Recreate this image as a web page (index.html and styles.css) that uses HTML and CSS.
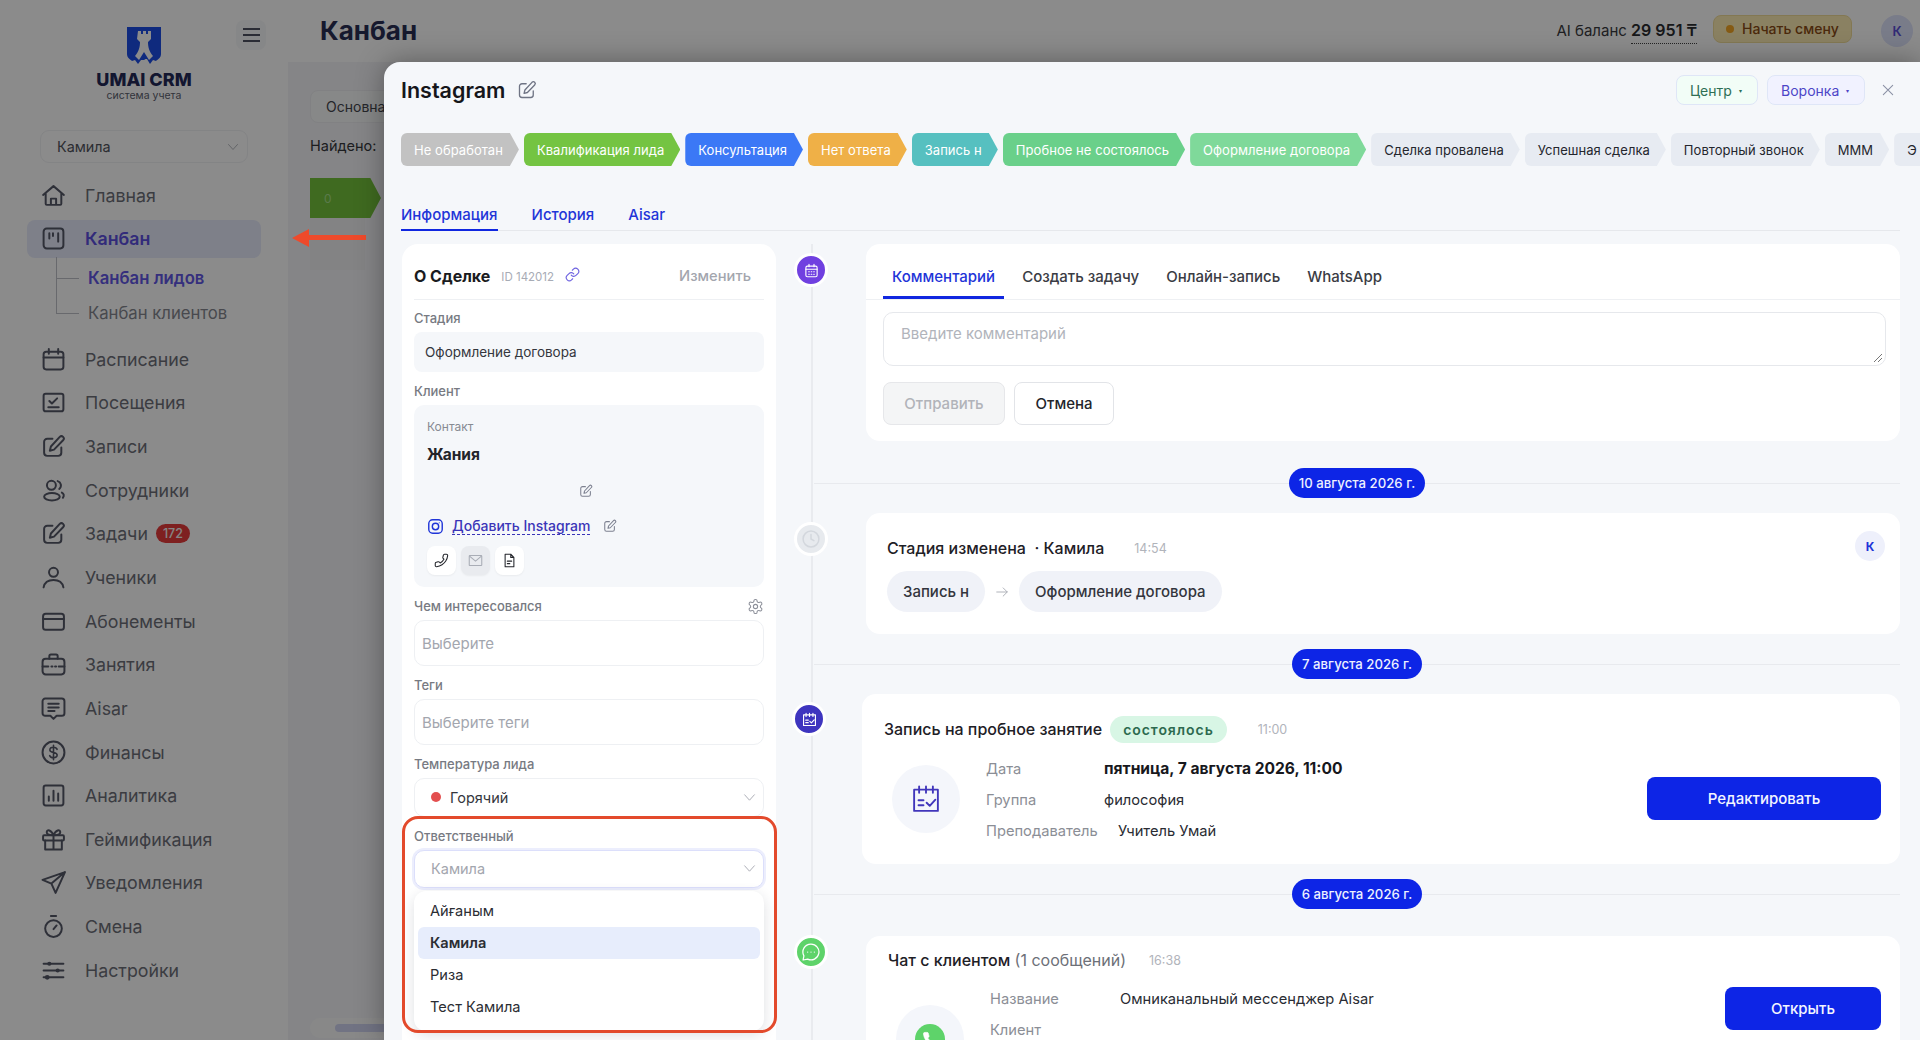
FILE: index.html
```html
<!DOCTYPE html>
<html lang="ru">
<head>
<meta charset="utf-8">
<title>Канбан</title>
<link rel="stylesheet" href="styles.css">
</head>
<body>
<svg class="defs" width="0" height="0">
  <symbol id="i-home" viewBox="0 0 24 24"><path d="M2 11.500 12 3l10 8.500M4.500 10v10a1 1 0 0 0 1 1h13a1 1 0 0 0 1-1V10M9.500 21v-6h5v6"/></symbol>
  <symbol id="i-kanban" viewBox="0 0 24 24"><rect x="2.500" y="2.500" width="19" height="19" rx="3"/><path d="M8 7v5M11.500 7v2.500M16.500 7v8"/></symbol>
  <symbol id="i-cal" viewBox="0 0 24 24"><rect x="2.500" y="4.500" width="19" height="17" rx="2.500"/><path d="M2.500 10h19M7.500 2v4.500M16.500 2v4.500"/></symbol>
  <symbol id="i-attend" viewBox="0 0 24 24"><rect x="2.500" y="3.500" width="19" height="17" rx="2"/><path d="m8 10.500 2.500 2.500 5-5M7 16.500h10"/></symbol>
  <symbol id="i-edit" viewBox="0 0 24 24"><path d="M11 4.500H6a3 3 0 0 0-3 3V18a3 3 0 0 0 3 3h10.500a3 3 0 0 0 3-3v-5"/><path d="M18 2.800a2.200 2.200 0 0 1 3.200 3.200L12.500 15l-4 1 1-4z"/></symbol>
  <symbol id="i-staff" viewBox="0 0 24 24"><circle cx="10" cy="7" r="4.300"/><ellipse cx="10.500" cy="18" rx="7.500" ry="3.500"/><path d="M16 3a4.300 4.300 0 0 1 1.500 7.500M20 14c2 1 2.500 3 1 5"/></symbol>
  <symbol id="i-user" viewBox="0 0 24 24"><circle cx="12" cy="7" r="4.300"/><path d="M2.500 21.500c1-5 5-7 9.500-7s8.500 2 9.500 7"/></symbol>
  <symbol id="i-card" viewBox="0 0 24 24"><rect x="2" y="4.500" width="20" height="15.500" rx="2.500"/><path d="M2 9.500h20"/></symbol>
  <symbol id="i-bag" viewBox="0 0 24 24"><rect x="1.500" y="6.500" width="21" height="15" rx="3"/><path d="M8 6.500V4a1.500 1.500 0 0 1 1.500-1.500h5A1.500 1.500 0 0 1 16 4v2.500M1.500 14H7M10 14h1M13.500 14h1M17 14h5.500"/></symbol>
  <symbol id="i-chat" viewBox="0 0 24 24"><path d="M4 2.500h16a2.500 2.500 0 0 1 2.500 2.500v11.500A2.500 2.500 0 0 1 20 19h-5l-3 3-3-3H4a2.500 2.500 0 0 1-2.500-2.500V5A2.500 2.500 0 0 1 4 2.500z"/><path d="M7 7.500h10M7 11h10M7 14.500h6"/></symbol>
  <symbol id="i-money" viewBox="0 0 24 24"><circle cx="12" cy="12" r="10.500"/><path d="M15.500 9c-.5-1.300-2-2-3.500-2-2 0-3.500 1-3.500 2.500 0 3.500 7 1.700 7 5 0 1.500-1.500 2.500-3.500 2.500-1.700 0-3.200-.8-3.700-2M12 5v14" class="thin"/></symbol>
  <symbol id="i-chart" viewBox="0 0 24 24"><rect x="2.500" y="2.500" width="19" height="19" rx="2"/><path d="M7.500 17v-4M12 17V7.500M16.500 17v-7"/></symbol>
  <symbol id="i-gift" viewBox="0 0 24 24"><rect x="2" y="8" width="20" height="5" rx="1"/><path d="M4 13v8.500h16V13M12 8v13.500M12 8C10 2.500 5.500 2 5.500 5c0 2 3 3 6.500 3zm0 0c2-5.500 6.500-6 6.500-3 0 2-3 3-6.500 3z"/></symbol>
  <symbol id="i-send" viewBox="0 0 24 24"><path d="M23 2 1.500 9.500 10 13l4 9zM10 13 23 2"/></symbol>
  <symbol id="i-timer" viewBox="0 0 24 24"><circle cx="12" cy="14" r="8"/><path d="M9.500 2h5M12 14.500l3-3.500"/></symbol>
  <symbol id="i-sliders" viewBox="0 0 24 24"><path d="M2.500 5.500h19M2.500 12h19M2.500 18.500h19"/><circle cx="8" cy="5.500" r="2" class="solid"/><circle cx="16" cy="12" r="2" class="solid"/><circle cx="6" cy="18.500" r="2.300" class="solid"/></symbol>
  <symbol id="i-ig" viewBox="0 0 24 24"><rect x="2.500" y="2.500" width="19" height="19" rx="5.500"/><circle cx="12" cy="12" r="4.500"/><circle cx="17.300" cy="6.700" r=".8" class="solid"/></symbol>
  <symbol id="i-phone" viewBox="0 0 24 24"><path d="M22 16.920v3a2 2 0 0 1-2.180 2 19.790 19.790 0 0 1-8.630-3.070 19.500 19.500 0 0 1-6-6 19.790 19.790 0 0 1-3.070-8.670A2 2 0 0 1 4.110 2h3a2 2 0 0 1 2 1.720 12.840 12.840 0 0 0 .7 2.810 2 2 0 0 1-.45 2.110L8.090 9.910a16 16 0 0 0 6 6l1.270-1.270a2 2 0 0 1 2.110-.45 12.840 12.840 0 0 0 2.810.7A2 2 0 0 1 22 16.920z"/></symbol>
  <symbol id="i-handset" viewBox="0 0 24 24"><path transform="matrix(-1 0 0 1 24 0)" d="M22 16.920v3a2 2 0 0 1-2.180 2 19.790 19.790 0 0 1-8.630-3.070 19.500 19.500 0 0 1-6-6 19.790 19.790 0 0 1-3.070-8.670A2 2 0 0 1 4.110 2h3a2 2 0 0 1 2 1.720 12.840 12.840 0 0 0 .7 2.810 2 2 0 0 1-.45 2.110L8.090 9.910a16 16 0 0 0 6 6l1.270-1.270a2 2 0 0 1 2.110-.45 12.840 12.840 0 0 0 2.810.7A2 2 0 0 1 22 16.920z"/></symbol>
  <symbol id="i-mail" viewBox="0 0 24 24"><rect x="2" y="4" width="20" height="16" rx="1"/><path d="m2.500 5 9.500 8 9.500-8"/></symbol>
  <symbol id="i-doc" viewBox="0 0 24 24"><path d="M5 2h9l5 5v15H5zM14 2v5h5M8.500 13h7M8.500 17h4"/></symbol>
  <symbol id="i-gear" viewBox="0 0 24 24"><path d="M12.220 2h-.44a2 2 0 0 0-2 2v.18a2 2 0 0 1-1 1.730l-.43.250a2 2 0 0 1-2 0l-.15-.08a2 2 0 0 0-2.730.730l-.22.380a2 2 0 0 0 .730 2.730l.15.100a2 2 0 0 1 1 1.720v.510a2 2 0 0 1-1 1.740l-.15.090a2 2 0 0 0-.730 2.730l.22.380a2 2 0 0 0 2.730.730l.15-.08a2 2 0 0 1 2 0l.43.250a2 2 0 0 1 1 1.730V20a2 2 0 0 0 2 2h.44a2 2 0 0 0 2-2v-.18a2 2 0 0 1 1-1.730l.43-.25a2 2 0 0 1 2 0l.15.08a2 2 0 0 0 2.730-.73l.22-.39a2 2 0 0 0-.73-2.730l-.15-.08a2 2 0 0 1-1-1.740v-.5a2 2 0 0 1 1-1.740l.15-.09a2 2 0 0 0 .73-2.730l-.22-.38a2 2 0 0 0-2.730-.73l-.15.08a2 2 0 0 1-2 0l-.43-.25a2 2 0 0 1-1-1.730V4a2 2 0 0 0-2-2z"/><circle cx="12" cy="12" r="3"/></symbol>
  <symbol id="i-link" viewBox="0 0 24 24"><path d="M10 13a5 5 0 0 0 7.540.54l3-3a5 5 0 0 0-7.070-7.070l-1.720 1.710"/><path d="M14 11a5 5 0 0 0-7.540-.54l-3 3a5 5 0 0 0 7.070 7.070l1.710-1.710"/></symbol>
  <symbol id="i-clock" viewBox="0 0 24 24"><circle cx="12" cy="12" r="9.500"/><path d="M12 6.500V12l3.500 2"/></symbol>
  <symbol id="i-bubble" viewBox="0 0 24 24"><path d="M12 2.500a9.500 9.500 0 1 1-4 18.100l-5.500 1 1-5A9.500 9.500 0 0 1 12 2.500z"/><path d="M8 12h.01M12 12h.01M16 12h.01"/></symbol>
  <symbol id="i-grid" viewBox="0 0 24 24"><rect x="3" y="5" width="18" height="17" rx="2.500"/><path d="M3 10h18M8 2v4M16 2v4M7.500 14h1M11.500 14h1M15.500 14h1M7.500 18h1M11.500 18h1M15.500 18h1"/></symbol>
  <symbol id="i-calcheck" viewBox="0 0 24 24"><path d="M2.500 4.500h19v17h-19zM6.500 2v5M12 2v5M17.500 2v5M6 13h4M6 17h4M12.500 15l2.500 2.500 4.500-5"/></symbol>
  <symbol id="i-chev" viewBox="0 0 24 24"><path d="m3 7 9 10 9-10"/></symbol>
  <symbol id="i-x" viewBox="0 0 24 24"><path d="M5 5l14 14M19 5 5 19"/></symbol>
  <symbol id="i-right" viewBox="0 0 24 24"><path d="M3 12h18M14 5l7 7-7 7"/></symbol>
</svg>

<div class="app">
  <aside class="sidebar">
    <div class="brand-row">
      <div class="brand">
        <svg class="shield" viewBox="0 0 34 38"><path class="shield-body" d="M0 0h34v27c0 4-3 5-5 7l-3-1-3 4-3-5h-1.500L17 33l-1 0-2 0-3 4-3-4-3 1c-2-2-5-3-5-7z"/><path class="shield-rook" d="M11 4h3v3h2V4h3v3h2V4h3v8l-3 3c0 5 1 9 5 14l-4 4-5-8-5 8-4-4c4-5 5-9 5-14l-3-3z"/></svg>
        <div class="brand-name">UMAI CRM</div>
        <div class="brand-sub">система учета</div>
      </div>
      <button class="burger"><span></span><span></span><span></span></button>
    </div>
    <div class="side-select"><span>Камила</span><svg class="ic chev"><use href="#i-chev"/></svg></div>
    <nav class="nav">
      <a class="nav-item"><svg class="ic"><use href="#i-home"/></svg><span>Главная</span></a>
      <a class="nav-item active"><svg class="ic"><use href="#i-kanban"/></svg><span>Канбан</span></a>
      <div class="subnav">
        <a class="sub-item current">Канбан лидов</a>
        <a class="sub-item">Канбан клиентов</a>
      </div>
      <a class="nav-item"><svg class="ic"><use href="#i-cal"/></svg><span>Расписание</span></a>
      <a class="nav-item"><svg class="ic"><use href="#i-attend"/></svg><span>Посещения</span></a>
      <a class="nav-item"><svg class="ic"><use href="#i-edit"/></svg><span>Записи</span></a>
      <a class="nav-item"><svg class="ic"><use href="#i-staff"/></svg><span>Сотрудники</span></a>
      <a class="nav-item"><svg class="ic"><use href="#i-edit"/></svg><span>Задачи</span><b class="count">172</b></a>
      <a class="nav-item"><svg class="ic"><use href="#i-user"/></svg><span>Ученики</span></a>
      <a class="nav-item"><svg class="ic"><use href="#i-card"/></svg><span>Абонементы</span></a>
      <a class="nav-item"><svg class="ic"><use href="#i-bag"/></svg><span>Занятия</span></a>
      <a class="nav-item"><svg class="ic"><use href="#i-chat"/></svg><span>Aisar</span></a>
      <a class="nav-item"><svg class="ic"><use href="#i-money"/></svg><span>Финансы</span></a>
      <a class="nav-item"><svg class="ic"><use href="#i-chart"/></svg><span>Аналитика</span></a>
      <a class="nav-item"><svg class="ic"><use href="#i-gift"/></svg><span>Геймификация</span></a>
      <a class="nav-item"><svg class="ic"><use href="#i-send"/></svg><span>Уведомления</span></a>
      <a class="nav-item"><svg class="ic"><use href="#i-timer"/></svg><span>Смена</span></a>
      <a class="nav-item"><svg class="ic"><use href="#i-sliders"/></svg><span>Настройки</span></a>
    </nav>
  </aside>

  <main class="main">
    <header class="topbar">
      <h1 class="page-title">Канбан</h1>
      <div class="top-right">
        <span class="balance">AI баланс <b>29 951 ₸</b></span>
        <span class="shift"><i></i>Начать смену</span>
        <span class="top-avatar">К</span>
      </div>
    </header>
    <section class="board">
      <div class="board-tab">Основная</div>
      <div class="found">Найдено:</div>
      <div class="board-stage">0</div>
      <div class="board-col"></div>
      <div class="board-scroll"><span></span></div>
    </section>
  </main>
</div>

<div class="overlay"></div>

<svg class="callout-arrow" viewBox="0 0 74 18"><path d="M0 9 17 0v6h57v5H17v7z"/></svg>

<section class="modal">
  <div class="modal-head">
    <div class="modal-title"><h2>Instagram</h2><svg class="ic title-edit"><use href="#i-edit"/></svg></div>
    <div class="modal-actions">
      <span class="pick pick-green">Центр<i>▾</i></span>
      <span class="pick pick-violet">Воронка<i>▾</i></span>
      <button class="close"><svg class="ic"><use href="#i-x"/></svg></button>
    </div>
  </div>

  <div class="stages">
    <span class="stage s-grey">Не обработан</span>
    <span class="stage s-lime">Квалификация лида</span>
    <span class="stage s-blue">Консультация</span>
    <span class="stage s-orange">Нет ответа</span>
    <span class="stage s-teal">Запись н</span>
    <span class="stage s-green">Пробное не состоялось</span>
    <span class="stage s-mint">Оформление договора</span>
    <span class="stage s-idle">Сделка провалена</span>
    <span class="stage s-idle">Успешная сделка</span>
    <span class="stage s-idle">Повторный звонок</span>
    <span class="stage s-idle">МММ</span>
    <span class="stage s-idle">Э</span>
  </div>

  <div class="tabs">
    <a class="tab on">Информация</a>
    <a class="tab">История</a>
    <a class="tab">Aisar</a>
  </div>

  <div class="modal-body">
    <div class="deal">
      <div class="deal-head">
        <strong>О Сделке</strong>
        <span class="deal-id">ID 142012</span>
        <svg class="ic deal-link"><use href="#i-link"/></svg>
        <a class="deal-change">Изменить</a>
      </div>

      <div class="lbl lbl-first">Стадия</div>
      <div class="static">Оформление договора</div>

      <div class="lbl">Клиент</div>
      <div class="client">
        <div class="client-cap">Контакт</div>
        <div class="client-name">Жания</div>
        <div class="client-edit"><svg class="ic mini"><use href="#i-edit"/></svg></div>
        <div class="client-ig">
          <svg class="ic ig"><use href="#i-ig"/></svg>
          <a class="ig-add">Добавить Instagram</a>
          <svg class="ic mini"><use href="#i-edit"/></svg>
        </div>
        <div class="client-btns">
          <span class="sq"><svg class="ic"><use href="#i-handset"/></svg></span>
          <span class="sq sq-off"><svg class="ic"><use href="#i-mail"/></svg></span>
          <span class="sq"><svg class="ic"><use href="#i-doc"/></svg></span>
        </div>
      </div>

      <div class="lbl lbl-row"><span>Чем интересовался</span><svg class="ic gear"><use href="#i-gear"/></svg></div>
      <div class="input h-a">Выберите</div>

      <div class="lbl">Теги</div>
      <div class="input h-b">Выберите теги</div>

      <div class="lbl">Температура лида</div>
      <div class="input h-c filled"><span class="hot"><i></i>Горячий</span><svg class="ic chev"><use href="#i-chev"/></svg></div>

      <div class="lbl">Ответственный</div>
      <div class="input h-d focus"><span>Камила</span><svg class="ic chev"><use href="#i-chev"/></svg></div>

      <ul class="menu">
        <li>Айғаным</li>
        <li class="sel">Камила</li>
        <li>Риза</li>
        <li>Тест Камила</li>
      </ul>
      <div class="callout-box"></div>
    </div>

    <div class="feed">
      <div class="row">
        <div class="node-cell"><span class="node n-purple"><svg class="ic"><use href="#i-grid"/></svg></span></div>
        <div class="card compose">
          <div class="c-tabs">
            <a class="c-tab on">Комментарий</a>
            <a class="c-tab">Создать задачу</a>
            <a class="c-tab">Онлайн-запись</a>
            <a class="c-tab">WhatsApp</a>
          </div>
          <div class="textarea">Введите комментарий<svg class="grip" viewBox="0 0 10 10"><path d="M9 1 1 9M9 5 5 9"/></svg></div>
          <div class="compose-btns">
            <button class="btn btn-off">Отправить</button>
            <button class="btn btn-line">Отмена</button>
          </div>
        </div>
      </div>

      <div class="date date-a"><i></i><span>10 августа 2026 г.</span><i></i></div>

      <div class="row">
        <div class="node-cell"><span class="node n-grey"><svg class="ic"><use href="#i-clock"/></svg></span></div>
        <div class="card change">
          <div class="change-main">
            <div class="line"><span class="ttl">Стадия изменена &nbsp;· Камила</span><span class="time t-a">14:54</span></div>
            <div class="flow"><span class="bean">Запись н</span><svg class="ic arrow"><use href="#i-right"/></svg><span class="bean">Оформление договора</span></div>
          </div>
          <span class="avatar">К</span>
        </div>
      </div>

      <div class="date"><i></i><span>7 августа 2026 г.</span><i></i></div>

      <div class="row">
        <div class="node-cell"><span class="node n-indigo shifted"><svg class="ic"><use href="#i-calcheck"/></svg></span></div>
        <div class="card trial">
          <div class="line"><span class="ttl">Запись на пробное занятие</span><span class="ok">состоялось</span><span class="time t-b">11:00</span></div>
          <div class="split">
            <span class="disc"><svg class="ic"><use href="#i-calcheck"/></svg></span>
            <dl class="facts">
              <div><dt>Дата</dt><dd class="strong">пятница, 7 августа 2026, 11:00</dd></div>
              <div><dt>Группа</dt><dd>философия</dd></div>
              <div><dt class="wide">Преподаватель</dt><dd>Учитель Умай</dd></div>
            </dl>
            <button class="btn btn-blue edit-btn">Редактировать</button>
          </div>
        </div>
      </div>

      <div class="date date-c"><i></i><span>6 августа 2026 г.</span><i></i></div>

      <div class="row">
        <div class="node-cell"><span class="node n-green up"><svg class="ic"><use href="#i-bubble"/></svg></span></div>
        <div class="card chat">
          <div class="line"><span class="ttl">Чат с клиентом <em>(1 сообщений)</em></span><span class="time t-c">16:38</span></div>
          <div class="split split-chat">
            <span class="disc disc-wa"><span class="wa"><svg class="ic"><use href="#i-phone"/></svg></span></span>
            <dl class="facts facts-chat">
              <div><dt>Название</dt><dd>Омниканальный мессенджер Aisar</dd></div>
              <div><dt>Клиент</dt><dd></dd></div>
            </dl>
            <button class="btn btn-blue open-btn">Открыть</button>
          </div>
        </div>
      </div>
    </div>
  </div>
</section>
</body>
</html>
```

FILE: styles.css
```css
* { box-sizing: border-box; }
html, body { margin: 0; height: 100%; overflow: hidden; }
body { position: relative; font-family: Inter, "Noto Sans", sans-serif; color: #1c1e26; background: #fff; }
.defs { position: absolute; }
h1, h2, ul, dl, dd { margin: 0; padding: 0; }
ul { list-style: none; }
button { font-family: inherit; border: 0; background: none; padding: 0; }
i, em { font-style: normal; }
.ic { width: 24px; height: 24px; fill: none; stroke: currentColor; stroke-width: 2; stroke-linecap: round; stroke-linejoin: round; flex: none; }
symbol .solid { fill: currentColor; stroke: none; }
symbol .thin { stroke-width: 1.500; }

/* shell */
.app { display: flex; height: 1040px; }
.sidebar { width: 288px; flex: none; background: #fff; }
.main { flex: 1; display: flex; flex-direction: column; min-width: 0; }

.brand-row { display: grid; grid-template-columns: 1fr auto 1fr; padding-top: 20px; height: 122px; }
.brand { grid-column: 2; display: flex; flex-direction: column; align-items: center; padding-top: 7px; }
.shield { width: 34px; height: 38px; }
.shield-body { fill: #1c4ee8; }
.shield-rook { fill: #fff; }
.brand-name { font-size: 18px; font-weight: 800; color: #232a58; line-height: 22px; margin-top: 4px; }
.brand-sub { font-size: 10.500px; color: #5b5e6d; line-height: 9px; }
.burger { grid-column: 3; justify-self: end; margin-right: 22px; width: 30px; height: 30px; border-radius: 8px; background: #f6f7f9; display: flex; flex-direction: column; justify-content: center; align-items: center; gap: 4px; }
.burger span { width: 17px; height: 2px; background: #4d5262; }

.side-select { margin: 8px 40px 0; height: 33px; border: 1px solid #f1f2f4; border-radius: 9px; display: flex; align-items: center; justify-content: space-between; padding: 0 8px 0 16px; font-size: 14.400px; color: #51545d; }
.side-select .chev { width: 12px; height: 12px; color: #9ea1a8; stroke-width: 1.500; }

.nav { margin-top: 13px; }
.nav-item { display: flex; align-items: center; height: 38px; margin: 0 27px 5.650px; padding-left: 14px; border-radius: 8px; font-size: 17.800px; color: #6c6e78; }
.nav-item .ic { width: 25px; height: 25px; margin-right: 19px; color: #555868; stroke-width: 1.900; }
.nav-item.active { background: #e7ebfb; color: #5c4fe0; font-weight: 600; }
.count { margin-left: 8px; padding: 0 7px; height: 19px; line-height: 19px; border-radius: 10px; background: #e83b3b; color: #f4f4f4; font-size: 12.500px; font-weight: 500; }
.subnav { margin: -2px 0 10px 56px; padding-left: 32px; height: 69px; position: relative; }
.subnav::before { content: ""; position: absolute; left: 0; top: -4px; bottom: 17px; border-left: 1px solid #bfc1c8; }
.sub-item { display: block; height: 34px; line-height: 34px; font-size: 16.700px; color: #85878f; position: relative; }
.sub-item + .sub-item { margin-top: 1px; }
.sub-item::before { content: ""; position: absolute; left: -32px; width: 23px; top: 17px; border-top: 1px solid #bfc1c8; }
.sub-item.current { color: #6157e6; font-weight: 600; }

.topbar { height: 62px; display: flex; align-items: center; justify-content: space-between; padding: 0 7px 0 32px; background: #fff; }
.page-title { font-size: 26px; font-weight: 700; color: #2a2f55; margin-top: -2px; }
.top-right { display: flex; align-items: center; height: 62px; }
.balance { font-size: 15px; color: #3a3b40; margin-right: 16px; margin-top: -3px; }
.balance b { font-size: 16px; font-weight: 600; color: #2b2c30; border-bottom: 1px dotted #444; padding-bottom: 3px; }
.shift { width: 139px; height: 28px; margin-top: -5px; border-radius: 8px; background: #fdedb4; border: 1px solid #f1dc99; color: #8a4b15; font-size: 14px; display: flex; align-items: center; gap: 8px; padding-left: 12px; font-weight: 500; }
.shift i { width: 8px; height: 8px; border-radius: 50%; background: #f4a623; }
.top-avatar { width: 32px; height: 32px; margin-left: 29px; border-radius: 50%; background: #dfe3fb; color: #5a50d8; font-size: 13px; font-weight: 600; display: flex; align-items: center; justify-content: center; }

.board { flex: 1; background: #f4f5f7; padding: 28px 22px; }
.board-tab { width: 200px; height: 33px; border: 1px solid #ededf0; border-radius: 8px; background: #f8f9fa; padding-left: 15px; line-height: 31px; font-size: 14px; color: #44464d; }
.found { margin-top: 13px; font-size: 14.500px; line-height: 20px; color: #36373c; }
.board-stage { margin-top: 22px; width: 71px; height: 40px; background: #74c23c; color: #a5e08a; font-size: 12px; line-height: 42px; padding-left: 14px; clip-path: polygon(0 0, 85% 0, 100% 50%, 85% 100%, 0 100%); }
.board-col { width: 55px; height: 52px; background: #f0f1f3; }
.board-scroll { margin-top: 748px; width: 110px; height: 20px; border-radius: 10px; background: #fafafa; display: flex; align-items: center; padding-left: 25px; }
.board-scroll span { width: 60px; height: 8px; background: #cfd3f0; border-radius: 4px; }

.overlay { position: absolute; inset: 0; background: rgba(0, 0, 0, .455); }
.callout-arrow { position: absolute; left: 292px; top: 229px; width: 74px; height: 18px; fill: #ee4a2b; }

/* modal */
.modal { position: absolute; left: 384px; top: 62px; right: 0; bottom: 0; overflow: hidden; background: #f5f7fa; border-top-left-radius: 16px; padding: 13px 20px 0 17px; box-shadow: 0 0 28px rgba(0, 0, 0, .35); display: flex; flex-direction: column; }
.modal-head { display: flex; justify-content: space-between; align-items: center; height: 30px; flex: none; }
.modal-title { display: flex; align-items: center; gap: 12px; }
.modal-title h2 { font-size: 21.500px; font-weight: 600; color: #15161a; }
.title-edit { width: 20px; height: 20px; color: #6f7484; stroke-width: 1.600; }
.modal-actions { display: flex; align-items: center; gap: 9px; }
.pick { height: 30px; border-radius: 8px; border: 1px solid #dfe6f7; display: flex; align-items: center; padding: 0 9px 0 13px; font-size: 14px; gap: 7px; }
.pick i { font-size: 6px; }
.pick-green { width: 82px; background: #f2fdf7; color: #2e6f54; }
.pick-violet { width: 98px; background: #f1f2ff; color: #4c45c7; }
.close { width: 24px; height: 24px; margin-left: 2px; color: #8b91a5; display: flex; align-items: center; justify-content: center; }
.close .ic { width: 16px; height: 16px; stroke-width: 1.600; }

.stages { display: flex; gap: 5px; margin: 28px -20px 0 0; flex: none; overflow: hidden; }
.stage { flex: none; height: 33px; line-height: 34px; padding: 0 16px 0 13px; border-radius: 6px; font-size: 13px; letter-spacing: .05px; color: #fff; clip-path: polygon(0 0, calc(100% - 9px) 0, 100% 50%, calc(100% - 9px) 100%, 0 100%); }
.s-grey { background: #c2c2c2; }
.s-lime { background: #74c442; }
.s-blue { background: #3b78f6; }
.s-orange { background: #efb047; }
.s-teal { background: #56c0c0; }
.s-green { background: #6ad08a; }
.s-mint { background: #7fd99a; }
.s-idle { background: #e7ebf2; color: #24262d; }

.tabs { display: flex; gap: 34px; margin-top: 31px; height: 34px; border-bottom: 1px solid #e6e8ec; flex: none; }
.tab { height: 34px; font-size: 15px; font-weight: 500; color: #1f35d8; line-height: 35px; }
.tab.on { border-bottom: 2px solid #1027e0; }

.modal-body { flex: 1; min-height: 0; display: flex; margin-top: 13px; margin-left: 1px; }

/* deal */
.deal { position: relative; width: 374px; flex: none; height: 900px; background: #fff; border-radius: 16px 16px 0 0; padding: 0 12px; }
.deal-head { height: 56px; padding-top: 8px; display: flex; align-items: center; border-bottom: 1px solid #eef0f3; }
.deal-head strong { font-size: 16px; font-weight: 700; color: #1a1b20; }
.deal-id { font-size: 11.500px; color: #a7abb5; margin-left: 11px; margin-top: 3px; }
.deal-link { width: 15px; height: 15px; color: #6d62e0; margin-left: 11px; margin-top: -2px; stroke-width: 1.800; }
.deal-change { margin-left: auto; margin-right: 13px; font-size: 14.700px; color: #a3a6ae; font-weight: 500; }
.lbl { margin: 11px 0 6px; height: 16px; line-height: 16px; font-size: 13px; font-weight: 500; color: #777a82; }
.lbl-first { margin-top: 10px; }
.lbl-row { display: flex; justify-content: space-between; align-items: center; }
.gear { width: 17px; height: 17px; color: #8d909a; stroke-width: 1.500; }
.static { height: 40px; line-height: 40px; padding-left: 11px; background: #f5f7fa; border-radius: 8px; font-size: 13.500px; color: #34363d; }
.client { height: 182px; background: #f5f7fa; border-radius: 10px; padding: 14px 13px 0; }
.client-cap { font-size: 12px; line-height: 16px; color: #878a92; }
.client-name { margin-top: 10px; font-size: 15.500px; line-height: 20px; font-weight: 700; color: #23242a; }
.client-edit { margin-top: 19px; height: 16px; display: flex; justify-content: center; padding-right: 6px; }
.mini { width: 14px; height: 14px; color: #7d8190; stroke-width: 1.800; }
.client-ig { margin-top: 16px; height: 20px; display: flex; align-items: center; }
.ig { width: 17px; height: 17px; color: #1f35d8; stroke-width: 2; }
.ig-add { margin: 0 13px 0 8px; font-size: 14px; font-weight: 500; color: #3b35b8; border-bottom: 1px dashed #3b35b8; line-height: 16px; }
.client-btns { margin-top: 10px; display: flex; gap: 5px; }
.sq { width: 29px; height: 29px; border-radius: 8px; background: #fff; display: flex; align-items: center; justify-content: center; color: #24262c; box-shadow: 0 1px 2px rgba(0, 0, 0, .05); }
.sq .ic { width: 15px; height: 15px; stroke-width: 1.700; }
.sq-off { background: #e9ebef; color: #a9adb6; }
.input { border: 1px solid #eef0f3; border-radius: 10px; display: flex; align-items: center; justify-content: space-between; padding: 0 7px; font-size: 15px; color: #a3a6ae; background: #fff; }
.h-a { height: 46px; }
.h-b { height: 46px; }
.h-c { height: 39px; padding: 0 7px 1px 16px; font-size: 14.500px; }
.h-d { height: 38px; padding: 0 7px 2px 16px; font-size: 14.500px; }
.chev { width: 13px; height: 13px; color: #9a9da6; stroke-width: 1.500; }
.filled { color: #34363d; }
.hot { display: flex; align-items: center; gap: 9px; }
.hot i { width: 10px; height: 10px; border-radius: 50%; background: #e34f4f; }
.focus { border: 1px solid #dcdffb; box-shadow: 0 0 0 2px #eceefd; }
.menu { position: absolute; left: 12px; top: 647px; width: 350px; height: 140px; padding: 4px; background: #fff; border-radius: 12px; box-shadow: 0 4px 14px rgba(30, 35, 60, .14); }
.menu li { height: 32px; line-height: 32px; padding-left: 12px; font-size: 14.600px; color: #2b2d33; border-radius: 6px; }
.menu .sel { background: #e7edfc; font-weight: 600; }
.callout-box { position: absolute; left: 0; top: 572px; width: 375px; height: 217px; border: 3px solid #e34a2c; border-radius: 16px; pointer-events: none; }

/* feed */
.feed { flex: 1; position: relative; min-width: 0; }
.feed::before { content: ""; position: absolute; left: 35px; top: 0; bottom: 0; width: 2px; background: #e9ebef; }
.row { display: grid; grid-template-columns: 90px 1fr; position: relative; }
.node-cell { padding: 9px 0 0 18px; }
.node { width: 34px; height: 34px; border-radius: 50%; display: flex; align-items: center; justify-content: center; border: 3px solid #fff; color: #fff; background: #888; }
.node .ic { width: 15px; height: 15px; stroke-width: 1.800; }
.n-purple { background: #7040e0; }
.n-grey { background: #e7eaee; color: #d3d7dd; }
.n-grey .ic { width: 20px; height: 20px; }
.n-indigo { background: #3e35bf; }
.n-green { background: #5ed36a; }
.n-green .ic { width: 20px; height: 20px; stroke-width: 1.500; }
.shifted { margin: -1px 0 0 -2px; }
.up { margin-top: -10px; }

.card { background: #fff; border-radius: 14px; }
.compose { height: 197px; padding: 0 14px 0 17px; }
.c-tabs { display: flex; gap: 9px; height: 56px; margin: 0 -14px 0 -17px; padding-left: 17px; border-bottom: 1px solid #eef0f3; }
.c-tab { height: 55px; line-height: 66px; padding: 0 9px; font-size: 15px; font-weight: 500; color: #3a3c44; }
.c-tab.on { color: #1f35d8; border-bottom: 3px solid #1027e0; }
.textarea { position: relative; margin-top: 12px; height: 54px; padding: 11px 17px; border: 1px solid #e6e8ec; border-radius: 10px; font-size: 15px; color: #b1b4bb; background: #fff; }
.grip { position: absolute; right: 2px; bottom: 2px; width: 10px; height: 10px; stroke: #777; fill: none; }
.compose-btns { margin-top: 16px; display: flex; gap: 9px; }
.btn { height: 43px; border-radius: 8px; font-size: 15px; font-weight: 500; }
.btn-off { width: 122px; background: #f4f5f6; border: 1px solid #e6e7ea; color: #b1b3b9; }
.btn-line { width: 100px; background: #fff; border: 1px solid #e2e4e8; color: #23252b; }
.btn-blue { background: #0d25e6; color: #f3f5ff; flex: none; }

.date { display: flex; align-items: center; height: 30px; margin: 15px 0; padding-left: 38px; }
.date i { flex: 1; border-top: 1px solid #e8eaee; }
.date span { height: 30px; line-height: 30px; padding: 0 10px; border-radius: 15px; background: #0d25e6; color: #eef1ff; font-size: 13.200px; font-weight: 500; }
.date-a { margin-top: 27px; }
.date-c { margin-bottom: 27px; }

.line { display: flex; align-items: center; height: 20px; }
.ttl { font-size: 16px; font-weight: 500; color: #1e2026; }
.ttl em { color: #6d7078; font-weight: 400; }
.time { font-size: 12.500px; color: #b1b4bb; }
.t-a { margin-left: 30px; }
.t-b { margin-left: 31px; }
.t-c { margin-left: 23px; }

.change { height: 121px; padding: 25px 15px 0 21px; display: flex; justify-content: space-between; }
.flow { margin-top: 13px; display: flex; align-items: center; }
.bean { height: 41px; line-height: 41px; padding: 0 16px; border-radius: 21px; background: #f0f2f8; font-size: 15px; font-weight: 500; color: #33353d; }
.arrow { width: 14px; height: 14px; color: #a5a8b0; margin: 0 10px; stroke-width: 1.500; }
.avatar { width: 30px; height: 30px; margin-top: -7px; border-radius: 50%; background: #eef0fb; color: #1f35d8; font-size: 12px; font-weight: 700; display: flex; align-items: center; justify-content: center; }

.trial { height: 170px; margin-left: -4px; padding: 25px 19px 0 22px; }
.ok { margin-left: 8px; height: 27px; line-height: 27px; padding: 0 13px; border-radius: 14px; background: #d8f6e5; color: #2d6a4f; font-size: 14px; font-weight: 600; letter-spacing: .95px; }
.split { display: flex; margin-top: 14px; position: relative; }
.disc { width: 68px; height: 68px; margin: 12px 26px 0 8px; border-radius: 50%; background: #f4f6fb; display: flex; align-items: center; justify-content: center; color: #4136bb; flex: none; }
.disc .ic { width: 30px; height: 30px; stroke-width: 1.500; }
.facts { flex: 1; font-size: 14.700px; color: #2a2c33; }
.facts > div { display: flex; height: 31px; align-items: center; }
dt { width: 118px; color: #8b8e96; flex: none; }
dt.wide { width: 132px; }
.strong { font-weight: 700; color: #17181d; font-size: 15.600px; }
.edit-btn { width: 234px; margin-top: 24px; }

.chat { height: 200px; padding: 14px 19px 0 22px; }
.split-chat { margin-top: 13px; }
.disc-wa { margin: 22px 26px 0 8px; }
.wa { width: 30px; height: 30px; border-radius: 50%; background: #5ed36a; display: flex; align-items: center; justify-content: center; color: #fff; }
.disc .wa .ic { width: 17px; height: 17px; fill: #fff; stroke-width: 1; }
.facts-chat dt { width: 130px; }
.open-btn { width: 156px; height: 43px; margin-top: 4px; }
```
